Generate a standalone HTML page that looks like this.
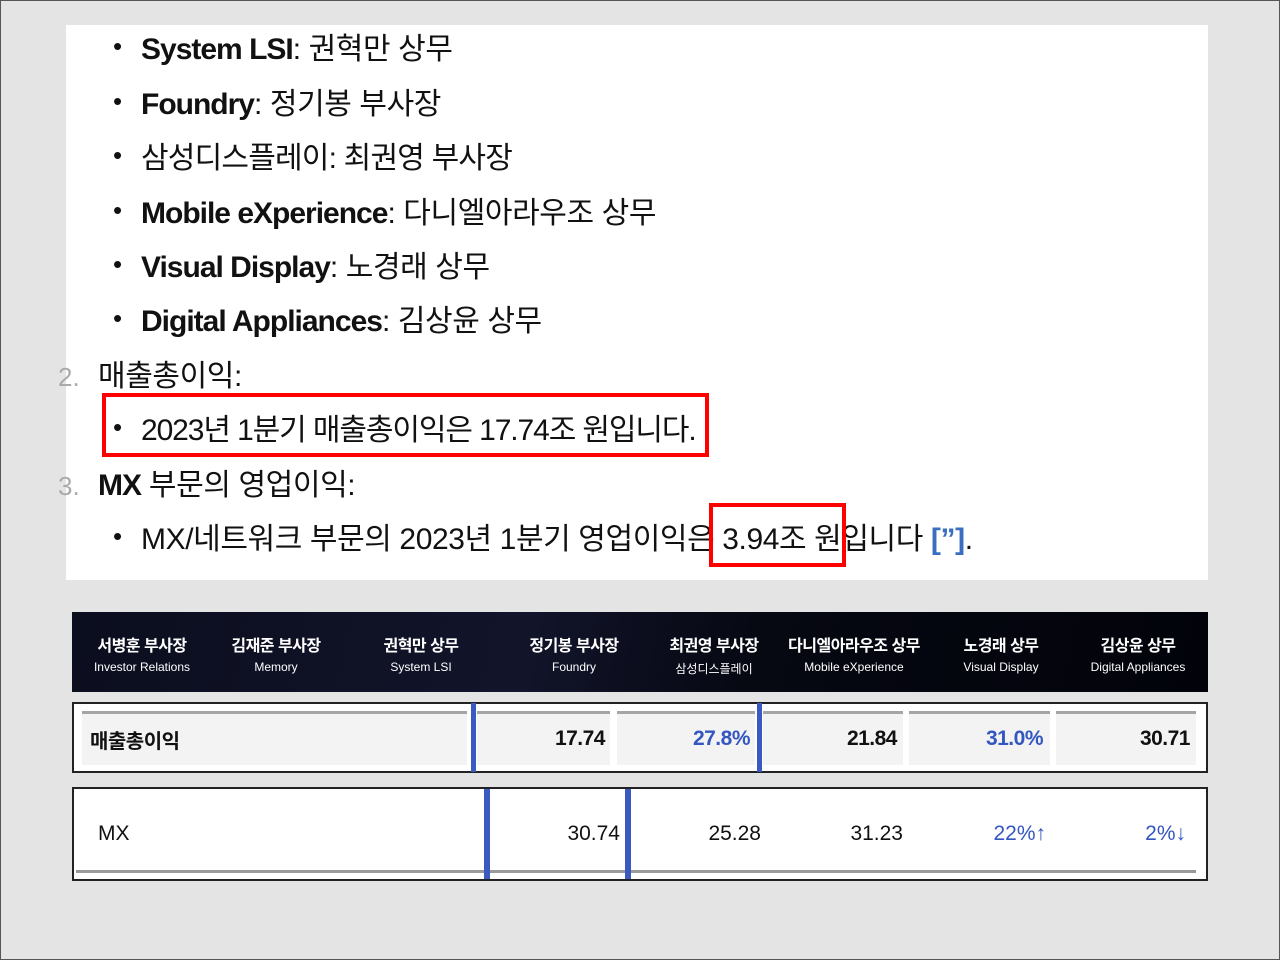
<!DOCTYPE html>
<html><head><meta charset="utf-8"><style>
*{margin:0;padding:0;box-sizing:border-box}
body{width:1280px;height:960px;background:#e4e4e4;position:relative;overflow:hidden;font-family:"Liberation Sans","Noto Sans CJK KR",sans-serif;color:#111}
.frame{position:absolute;left:0;top:0;width:1280px;height:960px;border:1px solid #555}
.panel{position:absolute;left:66px;top:25px;width:1142px;height:555px;background:#fff}
.l{position:absolute;font-size:30px;letter-spacing:-0.4px;white-space:nowrap;line-height:34px}
.b{font-weight:bold;letter-spacing:-1px}
.dot{position:absolute;font-size:26px;line-height:20px}
.num{position:absolute;font-size:26px;color:#aaa;line-height:34px}
.red{position:absolute;border:4px solid #f00}
.hdr{position:absolute;left:72px;top:612px;width:1136px;height:80px;background:linear-gradient(100deg,#0b0e1e 0%,#12142a 40%,#060812 60%,#02030a 100%)}
.hc{position:absolute;top:20px;text-align:center;color:#fff;font-family:"Liberation Sans Narrow","Liberation Sans","Noto Sans CJK KR",sans-serif;white-space:nowrap}
.hc .t{font-size:16px;font-weight:bold;letter-spacing:-0.5px}
.hc .s{font-size:12px;margin-top:4px}
.tb{position:absolute;left:72px;width:1136px;border:2px solid #222;background:#fff}
.c{position:absolute;background:#f3f3f3;border-top:3px solid #a5a5a5}
.v{position:absolute;font-size:21px;font-family:"Liberation Sans Narrow","Liberation Sans","Noto Sans CJK KR",sans-serif;white-space:nowrap;text-align:right;line-height:26px}
.vb{font-weight:bold;letter-spacing:-0.5px}
.bl{position:absolute;background:#3a5ac0}
.blue{color:#3356c0}
.g{position:absolute;height:3px;background:#9a9a9a}
</style></head><body>
<div class="frame"></div>
<div class="panel"></div>
<span class="dot" style="left:113px;top:36px">•</span><div class="l" style="left:141px;top:33px"><span class="b">System LSI</span>: 권혁만 상무</div>
<span class="dot" style="left:113px;top:91px">•</span><div class="l" style="left:141px;top:88px"><span class="b">Foundry</span>: 정기봉 부사장</div>
<span class="dot" style="left:113px;top:145px">•</span><div class="l" style="left:141px;top:142px;letter-spacing:-0.8px">삼성디스플레이: 최권영 부사장</div>
<span class="dot" style="left:113px;top:200px">•</span><div class="l" style="left:141px;top:197px"><span class="b">Mobile eXperience</span>: 다니엘아라우조 상무</div>
<span class="dot" style="left:113px;top:254px">•</span><div class="l" style="left:141px;top:251px"><span class="b">Visual Display</span>: 노경래 상무</div>
<span class="dot" style="left:113px;top:308px">•</span><div class="l" style="left:141px;top:305px"><span class="b">Digital Appliances</span>: 김상윤 상무</div>
<div class="num" style="left:58px;top:360px">2.</div><div class="l" style="left:98px;top:360px">매출총이익:</div>
<span class="dot" style="left:113px;top:417px">•</span><div class="l" style="left:141px;top:414px;letter-spacing:-1.1px">2023년 1분기 매출총이익은 17.74조 원입니다.</div>
<div class="red" style="left:102px;top:393px;width:607px;height:64px"></div>
<div class="num" style="left:58px;top:469px">3.</div><div class="l" style="left:98px;top:469px"><span class="b">MX</span> 부문의 영업이익:</div>
<span class="dot" style="left:113px;top:526px">•</span><div class="l" style="left:141px;top:523px">MX/네트워크 부문의 2023년 1분기 영업이익은 3.94조 원입니다 <span style="color:#3a6fc0;font-weight:bold">[”]</span>.</div>
<div class="red" style="left:709px;top:503px;width:137px;height:64px"></div>

<div class="hdr">
<div class="hc" style="left:20px;width:100px"><div class="t">서병훈 부사장</div><div class="s">Investor Relations</div></div>
<div class="hc" style="left:154px;width:100px"><div class="t">김재준 부사장</div><div class="s">Memory</div></div>
<div class="hc" style="left:299px;width:100px"><div class="t">권혁만 상무</div><div class="s">System LSI</div></div>
<div class="hc" style="left:452px;width:100px"><div class="t">정기봉 부사장</div><div class="s">Foundry</div></div>
<div class="hc" style="left:592px;width:100px"><div class="t">최권영 부사장</div><div class="s">삼성디스플레이</div></div>
<div class="hc" style="left:707px;width:150px"><div class="t">다니엘아라우조 상무</div><div class="s">Mobile eXperience</div></div>
<div class="hc" style="left:879px;width:100px"><div class="t">노경래 상무</div><div class="s">Visual Display</div></div>
<div class="hc" style="left:1006px;width:120px"><div class="t">김상윤 상무</div><div class="s">Digital Appliances</div></div>
</div>

<div class="tb" style="top:702px;height:71px"></div>
<div class="c" style="left:82px;top:711px;width:385px;height:54px"></div>
<div style="position:absolute;left:90px;top:725px;font-size:20px;font-weight:bold;letter-spacing:-0.5px">매출총이익</div>
<div class="c" style="left:477px;top:711px;width:133px;height:54px"></div>
<div class="c" style="left:617px;top:711px;width:138px;height:54px"></div>
<div class="c" style="left:763px;top:711px;width:140px;height:54px"></div>
<div class="c" style="left:909px;top:711px;width:141px;height:54px"></div>
<div class="c" style="left:1056px;top:711px;width:140px;height:54px"></div>
<div class="bl" style="left:471px;top:703px;width:5px;height:69px"></div>
<div class="bl" style="left:757px;top:703px;width:5px;height:69px"></div>
<div class="v vb" style="right:675px;top:726px">17.74</div>
<div class="v vb blue" style="right:530px;top:726px">27.8%</div>
<div class="v vb" style="right:383px;top:726px">21.84</div>
<div class="v vb blue" style="right:237px;top:726px">31.0%</div>
<div class="v vb" style="right:90px;top:726px">30.71</div>

<div class="tb" style="top:787px;height:94px"></div>
<div class="g" style="left:76px;top:870px;width:1120px"></div>
<div class="bl" style="left:484px;top:789px;width:6px;height:90px"></div>
<div class="bl" style="left:625px;top:789px;width:6px;height:90px"></div>
<div class="v" style="left:98px;top:821px">MX</div>
<div class="v" style="right:660px;top:821px">30.74</div>
<div class="v" style="right:519px;top:821px">25.28</div>
<div class="v" style="right:377px;top:821px">31.23</div>
<div class="v blue" style="right:234px;top:821px">22%↑</div>
<div class="v blue" style="right:94px;top:821px">2%↓</div>
</body></html>
